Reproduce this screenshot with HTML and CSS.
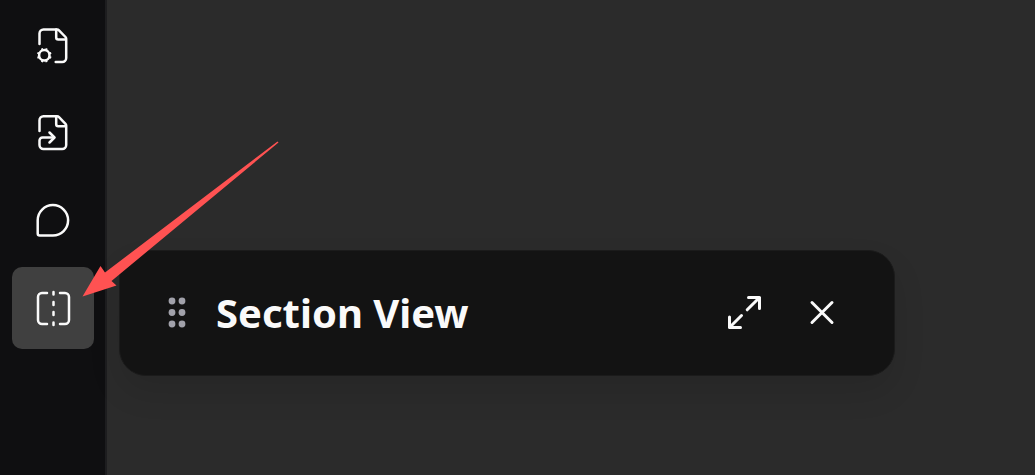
FILE: index.html
```html
<!DOCTYPE html>
<html lang="en">
<head>
  <meta charset="UTF-8">
  <title>Section View</title>
  <meta name="viewport" content="width=device-width, initial-scale=1.0">
  <link rel="stylesheet" href="styles.css">
</head>
<body>
  <nav class="sidebar" aria-label="Tools">
    <button class="tool-btn" aria-label="File settings">
      <svg class="icon" viewBox="0 0 48 48">
        <path d="M10.500 24V13.500a4 4 0 0 1 4-4H28c1 0 1.500.300 2 .800l6.500 6.700c.400.400.700 1 .700 1.700V38a4 4 0 0 1-4 4h-6.500"/>
        <path d="M27.200 9.500v8a2 2 0 0 0 2 2h7.500"/>
        <circle cx="15.300" cy="35.300" r="5.200"/>
        <path class="teeth" d="M12.900 28.400l.900 2.500M17.700 28.400l-.900 2.500M12.900 42.200l.900-2.500M17.700 42.200l-.900-2.500M8.400 32.900l2.500.900M8.400 37.700l2.500-.900M22.200 32.900l-2.500.900M22.200 37.700l-2.500-.900"/>
      </svg>
    </button>
    <button class="tool-btn" aria-label="Import file">
      <svg class="icon" viewBox="0 0 48 48">
        <path d="M10.500 23V12.300a4 4 0 0 1 4-4H28c1 0 1.500.300 2 .800l6.500 6.700c.400.400.700 1 .700 1.700V37a4 4 0 0 1-4 4H14.500a4 4 0 0 1-4-4v-4.500a3 3 0 0 1 3-3H25"/>
        <path d="M27.200 8.500v7.800a2 2 0 0 0 2 2h7.500"/>
        <path d="M20.500 24.500l5 5-5 5"/>
      </svg>
    </button>
    <button class="tool-btn" aria-label="Comments">
      <svg class="icon" viewBox="0 0 48 48">
        <path d="M8.700 24.300a15.200 15.200 0 1 1 15.200 15.200H10.700a2 2 0 0 1-2-2z"/>
      </svg>
    </button>
    <button class="tool-btn active" aria-label="Section view">
      <svg class="icon" viewBox="0 0 48 48">
        <path d="M18 9h-5a4 4 0 0 0-4 4v23a4 4 0 0 0 4 4h5M31 9h5a4 4 0 0 1 4 4v23a4 4 0 0 1-4 4h-5"/>
        <path d="M24.500 8v2.500M24.500 18v3M24.500 28v3M24.500 38.500V41"/>
      </svg>
    </button>
  </nav>

  <main class="workspace">
    <section class="panel" aria-labelledby="panelTitle">
      <button class="icon-btn handle" aria-label="Move panel">
        <svg class="dots" viewBox="0 0 18 32">
          <circle cx="4" cy="4" r="3.400"/><circle cx="14" cy="4" r="3.400"/>
          <circle cx="4" cy="15.500" r="3.400"/><circle cx="14" cy="15.500" r="3.400"/>
          <circle cx="4" cy="27" r="3.400"/><circle cx="14" cy="27" r="3.400"/>
        </svg>
      </button>
      <h2 class="panel-title" id="panelTitle">Section View</h2>
      <button class="icon-btn" aria-label="Expand">
        <svg class="icon bold" viewBox="0 0 48 48">
          <path d="M28.500 8.500h11v11M39.500 8.500L27.200 20.800M9.500 28v10.500h11M9.500 38.500L21.500 26.500"/>
        </svg>
      </button>
      <button class="icon-btn" aria-label="Close">
        <svg class="icon bold" viewBox="0 0 48 48">
          <path d="M14 13.500l20 20M34 13.500L14 33.500"/>
        </svg>
      </button>
    </section>
  </main>

  <!-- pointer to the active tool -->
  <svg class="pointer" viewBox="0 0 198 158" aria-hidden="true">
    <path d="M1.500 156.500L19.500 126l4.500 6.500L196.500 1.500l1 1L30.500 141l5 4.500z"/>
  </svg>
</body>
</html>
```
FILE: styles.css
```css
* { box-sizing: border-box; }
body {
  margin: 0;
  min-height: 100vh;
  display: flex;
  position: relative;
  font-family: "Segoe UI", "Noto Sans", sans-serif;
  background: #2b2b2b;
  color: #fafafa;
}
button {
  padding: 0;
  border: none;
  background: none;
  color: inherit;
  cursor: pointer;
}
svg { display: block; }
.sidebar {
  display: flex;
  flex-direction: column;
  gap: 6px;
  padding: 3px 11px 12px 12px;
  background: #0f0f11;
  border-right: 2px solid #1d1d1f;
}
.tool-btn {
  display: flex;
  align-items: center;
  justify-content: center;
  width: 82px;
  height: 82px;
  border-radius: 10px;
}
.tool-btn.active {
  background: #404040;
}
.icon {
  width: 48px;
  height: 48px;
  fill: none;
  stroke: #fafafa;
  stroke-width: 2.5;
  stroke-linecap: round;
  stroke-linejoin: round;
}
.icon.bold { stroke-width: 3; }
.icon .teeth { stroke-width: 2; stroke-linecap: butt; }
.workspace {
  flex: 1;
  padding: 250px 12px 12px;
}
.panel {
  display: flex;
  align-items: center;
  gap: 30px;
  max-width: 776px;
  padding: 35px 48px;
  background: #131313;
  border: 1px solid #1b1b1b;
  border-radius: 27px;
  box-shadow: 0 16px 32px rgba(0,0,0,0.1);
}
.panel-title {
  flex: 1;
  margin: 0;
  font-size: 40px;
  line-height: 54px;
  font-weight: 700;
}
.dots {
  width: 18px;
  height: 32px;
  fill: #a1a1aa;
}
.pointer {
  position: absolute;
  left: 81px;
  top: 140px;
  width: 198px;
  height: 158px;
  fill: #ff5252;
  pointer-events: none;
}
```
